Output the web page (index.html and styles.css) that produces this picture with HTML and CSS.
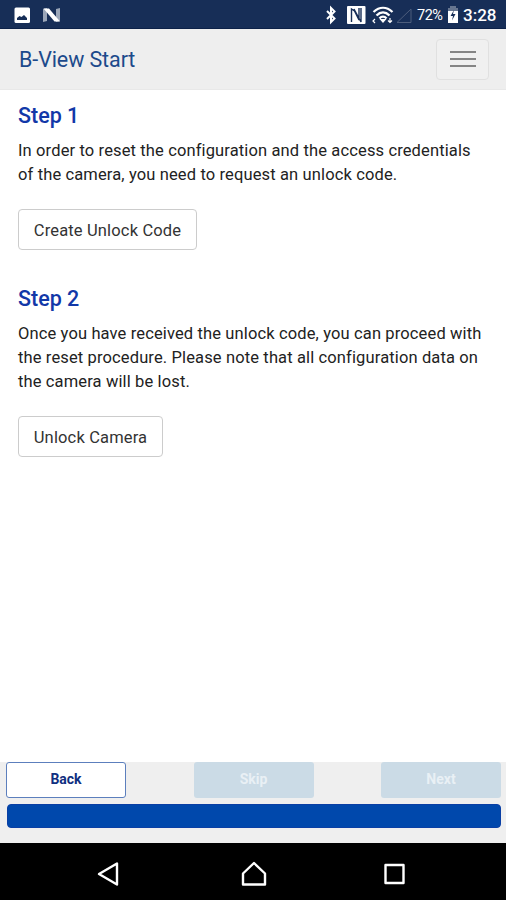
FILE: index.html
```html
<!DOCTYPE html>
<html lang="en">
<head>
<meta charset="utf-8">
<title>B-View Start</title>
<link rel="stylesheet" href="styles.css">
</head>
<body>
<div class="statusbar">
  <svg class="left-icons" width="64" height="28" viewBox="0 0 64 28">
    <rect x="14.500" y="7.500" width="15.500" height="15.500" rx="1.500" fill="#fff"/>
    <path d="M17 20v-2l2.500-2 2 1 2.500-2 3 3v2z" fill="#172e57"/>
    <path d="M43 9l4-1v13l-4 1zM56 9l4-1v13l-4 1z" fill="#9ba6b8"/>
    <path d="M43.500 8.500h5.500L60 21.500h-5.500z" fill="#fff"/>
  </svg>
  <svg class="signal-icons" width="90" height="28" viewBox="0 0 90 28">
    <path d="M3 11l7.500 7.500-3.500 3.500V8l3.500 3.500L3 19" fill="none" stroke="#fff" stroke-width="2"/>
    <rect x="23" y="6" width="18.500" height="18" rx="1" fill="#fff"/>
    <path d="M27.500 22V9l3 2 4.500 9V8M30 9l7 13V8" fill="none" stroke="#172e57" stroke-width="1.400"/>
    <g fill="none" stroke="#fff" stroke-width="2.300">
      <path d="M49.500 12c6-5.500 13-5.500 19 0M52.500 15.500c4-4 9-4 13 0M55.500 18.500c2-2.500 5-2.500 7 0"/>
    </g>
    <path d="M55.500 19h7L59 23z" fill="#fff"/>
    <path d="M51 19l-2 2 2 2M66 18v4M64 20.500l2 2 2-2" fill="none" stroke="#fff" stroke-width="1.200"/>
    <path d="M73 22.500h14V9z" fill="none" stroke="#4d5d7c"/>
  </svg>
  <span class="percent">72%</span>
  <svg class="battery" width="12" height="28" viewBox="0 0 12 28">
    <path d="M1 8h2V6h6v2h2v4H1z" fill="#66758f"/>
    <path d="M1 11h10v12H1z" fill="#fff"/>
    <path d="M7 10l-3.500 6h2.500l-1 4.500 3.500-6.500H6z" fill="#172e57"/>
  </svg>
  <span class="clock">3:28</span>
</div>
<header class="header">
  <h1 class="title">B-View Start</h1>
  <button class="menu" aria-label="Menu"><i></i><i></i><i></i></button>
</header>
<main class="content">
  <section class="step step-one">
    <h2>Step 1</h2>
    <p>In order to reset the configuration and the access credentials<br>of the camera, you need to request an unlock code.</p>
    <button class="action create">Create Unlock Code</button>
  </section>
  <section class="step">
    <h2>Step 2</h2>
    <p>Once you have received the unlock code, you can proceed with<br>the reset procedure. Please note that all configuration data on<br>the camera will be lost.</p>
    <button class="action unlock">Unlock Camera</button>
  </section>
</main>
<footer class="footer">
  <div class="wizard">
    <button class="back">Back</button>
    <button class="disabled" disabled>Skip</button>
    <button class="disabled" disabled>Next</button>
  </div>
  <div class="progress"></div>
</footer>
<nav class="navbar">
  <svg width="506" height="57" viewBox="0 0 506 57" fill="none" stroke="#fff" stroke-width="2.400" stroke-linejoin="round">
    <path d="M99 31l18-10.500v21z"/>
    <path d="M243 41.500V30.500L254 20l11 10.500v11z"/>
    <rect x="385.500" y="22" width="18" height="18"/>
  </svg>
</nav>
</body>
</html>
```
FILE: styles.css
```css
* { box-sizing: border-box; }
body {
  margin: 0;
  width: 506px;
  height: 900px;
  display: flex;
  flex-direction: column;
  overflow: hidden;
  background: #fff;
  font-family: Roboto, "Liberation Sans", sans-serif;
  color: #222;
}
button { font-family: inherit; margin: 0; padding: 0; }
svg { display: block; flex: none; }
.statusbar {
  height: 29px;
  flex: none;
  display: flex;
  background: #172e57;
  border-bottom: 1px solid #0c2148;
  color: #fff;
}
.signal-icons { margin-left: 260px; }
.percent {
  width: 29px;
  margin-left: 3px;
  font-size: 14.5px;
  line-height: 31px;
  letter-spacing: -0.5px;
}
.battery { margin-left: 1px; }
.clock {
  margin-left: 4px;
  font-size: 17px;
  font-weight: 500;
  line-height: 31px;
}
.header {
  height: 61px;
  flex: none;
  display: flex;
  justify-content: space-between;
  align-items: center;
  padding: 0 17px 0 19px;
  background: #eee;
  border-bottom: 1px solid #e8e8e8;
}
.title {
  margin: 0;
  font-size: 21.5px;
  font-weight: 400;
  letter-spacing: -0.1px;
  color: #1c4a8b;
}
.menu {
  width: 53px;
  height: 41px;
  display: flex;
  flex-direction: column;
  align-items: center;
  justify-content: center;
  gap: 5px;
  border: 1px solid #e0e0e0;
  border-radius: 4px;
  background: #f0f0f0;
}
.menu i { width: 26px; height: 2px; background: #858585; }
.content { flex: 1; padding: 13px 18px 0; }
.step-one { height: 183px; }
.step h2 {
  margin: 0;
  font-size: 21.5px;
  line-height: 26px;
  font-weight: 500;
  color: #1238a8;
}
.step p {
  margin: 10px 0 22px;
  font-size: 16.5px;
  line-height: 24px;
  letter-spacing: 0.13px;
  white-space: nowrap;
}
.action {
  display: block;
  height: 41px;
  padding-top: 2px;
  background: #fff;
  border: 1px solid #ccc;
  border-radius: 4px;
  font-size: 16.5px;
  letter-spacing: 0.15px;
  color: #333;
}
.create { width: 179px; }
.unlock { width: 145px; }
.footer {
  height: 81px;
  flex: none;
  padding: 0 5px 0 6px;
  background: #efefef;
}
.wizard { display: flex; justify-content: space-between; }
.wizard button {
  width: 120px;
  height: 36px;
  border-radius: 3px;
  font-size: 14px;
  font-weight: 700;
  padding-bottom: 2px;
}
.wizard .back { border: 1px solid #5c7fbd; background: #fff; color: #102f80; }
.wizard .disabled { border: 0; background: #cbdbe6; color: #e9f0f5; }
.progress {
  height: 24px;
  margin: 6px 0 0 1px;
  background: #0048ac;
  border: 1px solid #0a3fa5;
  border-radius: 4px;
}
.navbar { height: 57px; flex: none; background: #000; }
```
